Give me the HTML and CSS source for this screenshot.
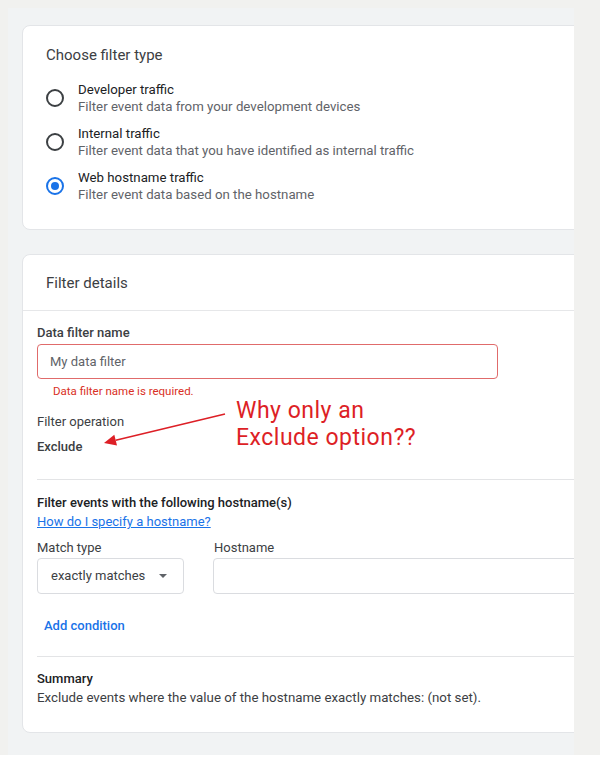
FILE: index.html
```html
<!DOCTYPE html>
<html>
<head>
<meta charset="utf-8">
<link rel="stylesheet" href="styles.css">
</head>
<body>
<div class="outer">
  <div class="panel">
    <section class="card card-type">
      <h2 class="card-title">Choose filter type</h2>
      <div class="radio-row">
        <span class="radio"></span>
        <div class="radio-text">
          <div class="radio-label">Developer traffic</div>
          <div class="radio-desc">Filter event data from your development devices</div>
        </div>
      </div>
      <div class="radio-row">
        <span class="radio"></span>
        <div class="radio-text">
          <div class="radio-label">Internal traffic</div>
          <div class="radio-desc">Filter event data that you have identified as internal traffic</div>
        </div>
      </div>
      <div class="radio-row">
        <span class="radio checked"></span>
        <div class="radio-text">
          <div class="radio-label">Web hostname traffic</div>
          <div class="radio-desc">Filter event data based on the hostname</div>
        </div>
      </div>
    </section>

    <section class="card card-details">
      <header class="details-head">Filter details</header>
      <div class="details-body">
        <div class="field-label">Data filter name</div>
        <div class="text-input error-input">My data filter</div>
        <div class="error-text">Data filter name is required.</div>
        <div class="op-label">Filter operation</div>
        <div class="op-value">Exclude</div>

        <div class="annotation">
          <div class="note">Why only an<br>Exclude option??</div>
          <svg class="note-arrow" width="130" height="56" viewBox="0 0 130 56">
            <line x1="125" y1="19" x2="15.7" y2="45.2" stroke="#dd1f26" stroke-width="1.6"/>
            <polygon points="4,48 17,50.4 14.3,39.8" fill="#dd1f26"/>
          </svg>
        </div>

        <hr class="divider">

        <div class="section-title">Filter events with the following hostname(s)</div>
        <a class="help-link" href="#">How do I specify a hostname?</a>
        <div class="cond-row">
          <div class="cond-col">
            <div class="cond-label">Match type</div>
            <div class="select-box">exactly matches <span class="caret"></span></div>
          </div>
          <div class="cond-col grow">
            <div class="cond-label">Hostname</div>
            <div class="host-input"></div>
          </div>
        </div>
        <div class="add-cond">Add condition</div>

        <hr class="divider divider-2">

        <div class="section-title summary-title">Summary</div>
        <div class="summary-text">Exclude events where the value of the hostname exactly matches: (not set).</div>
      </div>
    </section>
  </div>
</div>
</body>
</html>
```

FILE: styles.css
```css
* { box-sizing: border-box; }
html, body {
  margin: 0;
  background: #ffffff;
  font-family: Roboto, "Liberation Sans", Arial, sans-serif;
  color: #3c4043;
}
.outer {
  height: 755px;
  background: #f1f1ef;
  padding: 8px 0 0 8px;
}
.panel {
  width: 566px;
  height: 747px;
  background: #f1f3f4;
  overflow: hidden;
  padding: 17px 0 0 14px;
}
.card {
  width: 580px;
  background: #ffffff;
  border: 1px solid #e3e5e8;
  border-radius: 8px;
}
.card-type {
  height: 205px;
  padding: 19px 24px 0 23px;
}
.card-title {
  margin: 0;
  font-size: 15px;
  font-weight: 400;
  line-height: 20px;
  color: #3c4043;
}
.radio-row {
  display: flex;
  align-items: center;
  gap: 14px;
  height: 44px;
}
.card-title + .radio-row { margin-top: 11px; }
.radio {
  width: 18px;
  height: 18px;
  border: 2px solid #3c4043;
  border-radius: 50%;
  flex: none;
  position: relative;
}
.radio.checked {
  border-color: #1a73e8;
}
.radio.checked::after {
  content: "";
  position: absolute;
  left: 3px;
  top: 3px;
  width: 8px;
  height: 8px;
  border-radius: 50%;
  background: #1a73e8;
}
.radio-label {
  font-size: 13.25px;
  line-height: 17px;
  color: #202124;
}
.radio-desc {
  font-size: 13.25px;
  line-height: 17px;
  color: #5f6368;
}
.card-details {
  margin-top: 24px;
  height: 479px;
}
.details-head {
  height: 56px;
  padding: 18px 0 0 23px;
  font-size: 15px;
  line-height: 20px;
  color: #3c4043;
  border-bottom: 1px solid #e6e7e9;
}
.details-body {
  position: relative;
  padding: 14px 0 0 14px;
}
.field-label {
  font-size: 13px;
  line-height: 16px;
  font-weight: 500;
  color: #3c4043;
}
.text-input {
  margin-top: 3px;
  width: 461px;
  height: 35px;
  border-radius: 4px;
  padding: 0 12px;
  font-size: 13px;
  line-height: 33px;
  color: #5f6368;
}
.error-input {
  border: 1px solid #e06b6b;
}
.error-text {
  margin-top: 5px;
  padding-left: 16px;
  font-size: 11.5px;
  line-height: 14px;
  color: #d93025;
}
.op-label {
  margin-top: 16px;
  font-size: 13px;
  line-height: 16px;
  color: #3c4043;
}
.op-value {
  margin-top: 9px;
  font-size: 13px;
  line-height: 16px;
  font-weight: 500;
  color: #3c4043;
}
.annotation {
  position: absolute;
  left: 77px;
  top: 84px;
  width: 330px;
  height: 60px;
}
.note {
  position: absolute;
  left: 136px;
  top: 2px;
  font-family: Roboto, "Liberation Sans", sans-serif;
  font-size: 23px;
  line-height: 27px;
  letter-spacing: 0.5px;
  color: #dd1f26;
  white-space: nowrap;
}
.note-arrow {
  position: absolute;
  left: 0;
  top: 0;
}
.divider {
  margin: 24px 0 0 0;
  border: 0;
  border-top: 1px solid #e3e4e6;
  height: 0;
}
.section-title {
  margin-top: 15px;
  font-size: 13px;
  line-height: 16px;
  font-weight: 500;
  color: #202124;
}
.help-link {
  display: inline-block;
  margin-top: 3px;
  font-size: 13px;
  line-height: 16px;
  color: #1a73e8;
  text-decoration: underline;
}
.cond-row {
  display: flex;
  gap: 30px;
  margin-top: 10px;
}
.cond-col.grow { flex: 1; }
.cond-label {
  font-size: 13px;
  line-height: 16px;
  color: #3c4043;
}
.select-box {
  margin-top: 2px;
  width: 147px;
  height: 36px;
  border: 1px solid #dadce0;
  border-radius: 4px;
  padding: 0 0 0 13px;
  font-size: 13px;
  line-height: 34px;
  color: #3c4043;
  display: flex;
  align-items: center;
}
.caret {
  display: inline-block;
  margin-left: 14px;
  width: 0;
  height: 0;
  border-left: 4px solid transparent;
  border-right: 4px solid transparent;
  border-top: 4px solid #5f6368;
}
.host-input {
  margin-top: 2px;
  height: 36px;
  border: 1px solid #dadce0;
  border-radius: 4px;
  margin-left: -1px;
}
.add-cond {
  margin-top: 24px;
  padding-left: 7px;
  font-size: 13px;
  line-height: 16px;
  font-weight: 500;
  color: #1a73e8;
}
.divider-2 { margin-top: 22px; }
.summary-title { margin-top: 14px; color: #202124; }
.summary-text {
  margin-top: 3px;
  font-size: 13.3px;
  line-height: 16px;
  color: #3c4043;
}
```
